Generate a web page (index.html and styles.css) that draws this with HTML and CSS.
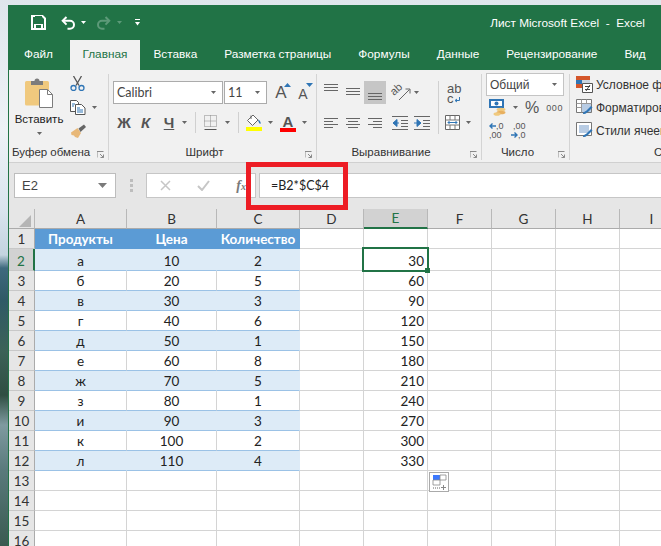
FILE: index.html
```html
<!DOCTYPE html>
<html lang="ru">
<head>
<meta charset="utf-8">
<title>Лист Microsoft Excel - Excel</title>
<link rel="stylesheet" href="styles.css">
</head>
<body>
<div class="desktop">
  <div class="window">
    <header class="titlebar">
      <div class="qat">
        <svg class="q-save" width="15" height="15" viewBox="0 0 15 15"><path d="M1 1h10.500L14 3.500V14H1z" fill="none" stroke="#fff" stroke-width="2"/><path d="M4 1h7v4H4z" fill="#217346"/><path d="M3 9h9v5H3z" fill="#fff"/><path d="M5 10h5v3H5z" fill="#217346"/></svg>
        <svg class="q-undo" width="15" height="14" viewBox="0 0 15 14"><path d="M5.500 1 1.700 4.800l3.800 3.800" fill="none" stroke="#fff" stroke-width="2"/><path d="M2 4.800h7a4 4 0 0 1 0 8H6.500" fill="none" stroke="#fff" stroke-width="2"/></svg>
        <svg class="q-a1" width="5" height="3" viewBox="0 0 5 3"><path d="M0 0h5L2.500 3z" fill="#fff"/></svg>
        <svg class="q-redo" width="15" height="14" viewBox="0 0 15 14"><path d="M9.500 1l3.800 3.800-3.800 3.800" fill="none" stroke="#5d9a79" stroke-width="2"/><path d="M13 4.800H6a4 4 0 0 0 0 8h2.500" fill="none" stroke="#5d9a79" stroke-width="2"/></svg>
        <svg class="q-a2" width="5" height="3" viewBox="0 0 5 3"><path d="M0 0h5L2.500 3z" fill="#5d9a79"/></svg>
        <svg class="q-more" width="5" height="7" viewBox="0 0 5 7"><path d="M0 0h5v1H0z" fill="#fff"/><path d="M0 3h5L2.500 6.500z" fill="#fff"/></svg>
      </div>
      <div class="doc-title">Лист Microsoft Excel&nbsp; -&nbsp; Excel</div>
    </header>

    <nav class="tabs">
      <span class="tab t-file">Файл</span>
      <span class="tab t-active">Главная</span>
      <span class="tab">Вставка</span>
      <span class="tab">Разметка страницы</span>
      <span class="tab">Формулы</span>
      <span class="tab">Данные</span>
      <span class="tab">Рецензирование</span>
      <span class="tab">Вид</span>
    </nav>

    <section class="ribbon">
      <div class="group g-clip">
        <div class="clip-body">
          <div class="paste">
            <svg width="28" height="30" viewBox="0 0 28 30"><path d="M1.500 3h21a1.500 1.500 0 0 1 1.500 1.500V26a1.500 1.500 0 0 1-1.500 1.500h-21A1.500 1.500 0 0 1 0 26V4.500A1.500 1.500 0 0 1 1.500 3z" fill="#f0c97e"/><path d="M6 3h3.500a2.500 2.500 0 0 1 5 0H18v4H6z" fill="#7c7c7c"/><path d="M14.500 11.500h8l5 5v13h-13z" fill="#fff" stroke="#7c7c7c"/><path d="M22.500 11.500v5h5" fill="none" stroke="#7c7c7c"/></svg>
            <span class="paste-label">Вставить</span>
            <svg class="paste-arrow" width="5" height="3" viewBox="0 0 5 3"><path d="M0 0h5L2.500 3z" fill="#666"/></svg>
          </div>
          <div class="clip-tools">
            <svg width="15" height="15" viewBox="0 0 15 15"><path d="M3.500 0l5.500 9.500M11.500 0 6 9.500" stroke="#555" stroke-width="1.300" fill="none"/><circle cx="3.500" cy="12" r="2.500" fill="none" stroke="#2f75b5" stroke-width="1.300"/><circle cx="11.500" cy="12" r="2.500" fill="none" stroke="#2f75b5" stroke-width="1.300"/></svg>
            <div class="tool-row">
              <svg width="16" height="15" viewBox="0 0 16 15"><path d="M.5.500h6l2 2v9h-8z" fill="#fff" stroke="#555"/><path d="M5.500 4.500h6l3.500 3.500v6.500H5.500z" fill="#fff" stroke="#555"/><path d="M7 8h3M7 10h6M7 12h6M2 4h3M2 6h2" stroke="#2f75b5"/></svg>
              <svg class="a-copy" width="5" height="3" viewBox="0 0 5 3"><path d="M0 0h5L2.500 3z" fill="#666"/></svg>
            </div>
            <svg width="18" height="15" viewBox="0 0 18 15"><path d="M1 8.500 7.500 4l3.500 5-3 5-3-1-1-1.500-2.500-.5z" fill="#e8b878"/><path d="M8.500 4.500 14 .5l2 2.500-5.500 5z" fill="#666"/></svg>
          </div>
        </div>
        <div class="glabel l-clip">Буфер обмена<svg class="launch" width="7" height="7" viewBox="0 0 7 7"><path d="M0 6.500V.5h6.500M3 3l3.500 3.500M6.500 3.500v3h-3" fill="none" stroke="#8a8a8a"/></svg></div>
      </div>

      <div class="group g-font">
        <div class="rows">
          <div class="row">
            <div class="select s-font"><span class="s-text">Calibri</span><svg width="5" height="3" viewBox="0 0 5 3"><path d="M0 0h5L2.500 3z" fill="#666"/></svg></div>
            <div class="select s-size"><span class="s-text">11</span><svg width="5" height="3" viewBox="0 0 5 3"><path d="M0 0h5L2.500 3z" fill="#666"/></svg></div>
            <span class="grow">A<svg width="7" height="4" viewBox="0 0 7 4"><path d="M0 4h7L3.500 0z" fill="#2f75b5"/></svg></span>
            <span class="shrink">A<svg width="7" height="4" viewBox="0 0 7 4"><path d="M0 0h7L3.500 4z" fill="#2f75b5"/></svg></span>
          </div>
          <div class="row">
            <span class="fmt f-b">Ж</span>
            <span class="fmt f-i">К</span>
            <span class="fmt f-u">Ч</span>
            <svg class="gap2" width="5" height="3" viewBox="0 0 5 3"><path d="M0 0h5L2.500 3z" fill="#666"/></svg>
            <i class="sep gap8"></i>
            <svg class="gap8" width="13" height="15" viewBox="0 0 13 15"><path d="M.5 14.500h12" stroke="#555"/><path d="M.5.500h12v11H.5zM6.500.5v11M.5 6h12" fill="none" stroke="#888" stroke-dasharray="1 1"/></svg>
            <svg class="gap8" width="5" height="3" viewBox="0 0 5 3"><path d="M0 0h5L2.500 3z" fill="#666"/></svg>
            <i class="sep gap8"></i>
            <svg class="gap7" width="16" height="17" viewBox="0 0 16 17"><path d="M7 1 1.500 6.500 6.500 11.500 12 6z" fill="#fff" stroke="#666"/><path d="M5 1.500V5" stroke="#666"/><path d="M12 5.500c2 1 3 2.500 2.500 4.500-1.500-.5-2-2-2.500-4.500z" fill="#2f75b5"/><path d="M0 13h16v4H0z" fill="#ff0"/></svg>
            <svg class="gap6" width="5" height="3" viewBox="0 0 5 3"><path d="M0 0h5L2.500 3z" fill="#666"/></svg>
            <span class="fcolor gap7">A</span>
            <svg class="gap6" width="5" height="3" viewBox="0 0 5 3"><path d="M0 0h5L2.500 3z" fill="#666"/></svg>
          </div>
        </div>
        <div class="glabel">Шрифт<svg class="launch" width="7" height="7" viewBox="0 0 7 7"><path d="M0 6.500V.5h6.500M3 3l3.500 3.500M6.500 3.500v3h-3" fill="none" stroke="#8a8a8a"/></svg></div>
      </div>

      <div class="group g-align">
        <div class="align-body">
          <div class="align-grid">
            <svg class="cell" width="22" height="23" viewBox="0 0 22 23"><path d="M4 3.500h14M4 6.500h14M4 9.500h14" stroke="#666"/></svg>
            <svg class="cell" width="22" height="23" viewBox="0 0 22 23"><path d="M4 7.500h14M4 10.500h14M4 13.500h14" stroke="#666"/></svg>
            <svg class="cell on" width="22" height="23" viewBox="0 0 22 23"><path d="M4 12.500h14M4 15.500h14M4 18.500h14" stroke="#666"/></svg>
            <span class="orient">
              <svg width="19" height="17" viewBox="0 0 19 17"><text class="orient-text" x="2" y="12" transform="rotate(-42 2 12)">ab</text><path d="M7 16 17.500 5.500M13.500 5h4.500v4.500" fill="none" stroke="#666"/></svg>
              <svg width="5" height="3" viewBox="0 0 5 3"><path d="M0 0h5L2.500 3z" fill="#666"/></svg>
            </span>
            <svg class="cell" width="22" height="23" viewBox="0 0 22 23"><path d="M4 7.500h14M4 10.500h9M4 13.500h14M4 16.500h9" stroke="#666"/></svg>
            <svg class="cell" width="22" height="23" viewBox="0 0 22 23"><path d="M4 7.500h14M6 10.500h10M4 13.500h14M6 16.500h10" stroke="#666"/></svg>
            <svg class="cell" width="22" height="23" viewBox="0 0 22 23"><path d="M4 7.500h14M9 10.500h9M4 13.500h14M9 16.500h9" stroke="#666"/></svg>
            <span class="indents">
              <svg width="16" height="14" viewBox="0 0 16 14"><path d="M0 .5h16M9 4.500h7M9 7.500h7M9 10.500h7M0 13.500h16" stroke="#666"/><path d="M7 7H3M5 3.500 1 7l4 3.500z" fill="#2f75b5" stroke="#2f75b5"/></svg>
              <svg width="16" height="14" viewBox="0 0 16 14"><path d="M0 .5h16M9 4.500h7M9 7.500h7M9 10.500h7M0 13.500h16" stroke="#666"/><path d="M0 7h4M3 3.500 7 7l-4 3.500z" fill="#2f75b5" stroke="#2f75b5"/></svg>
            </span>
          </div>
          <i class="sep-tall"></i>
          <div class="wrap-col">
            <span class="wrap-text">ab<br>c<svg width="6" height="6" viewBox="0 0 6 6"><path d="M5.500 0v3.500H1.500M3 2 1 3.500 3 5" fill="none" stroke="#2f75b5"/></svg></span>
            <span class="merge">
              <svg width="15" height="15" viewBox="0 0 15 15"><path d="M.5.500h14v14H.5z" fill="#fff" stroke="#666"/><path d="M.5 5H14.500M.5 10H14.500M5 .5V5M10 .5V5M5 10v4.500M10 10v4.500" stroke="#777" fill="none"/><path d="M3 7.500h9M4.500 6 3 7.500 4.500 9M10.500 6 12 7.500 10.500 9" fill="none" stroke="#2f75b5"/></svg>
              <svg width="5" height="3" viewBox="0 0 5 3"><path d="M0 0h5L2.500 3z" fill="#666"/></svg>
            </span>
          </div>
        </div>
        <div class="glabel">Выравнивание<svg class="launch" width="7" height="7" viewBox="0 0 7 7"><path d="M0 6.500V.5h6.500M3 3l3.500 3.500M6.500 3.500v3h-3" fill="none" stroke="#8a8a8a"/></svg></div>
      </div>

      <div class="group g-num">
        <div class="num-body">
          <div class="select s-num"><span class="s-text">Общий</span><svg width="5" height="3" viewBox="0 0 5 3"><path d="M0 0h5L2.500 3z" fill="#666"/></svg></div>
          <div class="num-row">
            <svg width="17" height="17" viewBox="0 0 17 17"><path d="M0 0h15v9H0z" fill="#2f75b5"/><path d="M2 2h11v5H2z" fill="#fff"/><circle cx="7.500" cy="4.500" r="2" fill="#2f75b5"/><ellipse cx="12" cy="10.500" rx="4.500" ry="1.800" fill="#f0c97e"/><ellipse cx="12" cy="13.500" rx="4.500" ry="1.800" fill="#e8b060"/><ellipse cx="8" cy="15" rx="3.500" ry="1.800" fill="#f0c97e"/></svg>
            <svg class="gap7" width="5" height="3" viewBox="0 0 5 3"><path d="M0 0h5L2.500 3z" fill="#666"/></svg>
            <span class="pct">%</span>
            <span class="thou">000</span>
          </div>
          <div class="num-row row-dec">
            <span class="dec"><svg width="7" height="6" viewBox="0 0 7 6"><path d="M7 3H1M3.500.5 1 3l2.500 2.500" fill="none" stroke="#2f75b5" stroke-width="1.400"/></svg><b>,0</b><em>,00</em></span>
            <span class="dec dec2"><b>,00</b><svg width="7" height="6" viewBox="0 0 7 6"><path d="M0 3h6M3.500.5 6 3 3.500 5.500" fill="none" stroke="#2f75b5" stroke-width="1.400"/></svg><em>,0</em></span>
          </div>
        </div>
        <div class="glabel">Число<svg class="launch" width="7" height="7" viewBox="0 0 7 7"><path d="M0 6.500V.5h6.500M3 3l3.500 3.500M6.500 3.500v3h-3" fill="none" stroke="#8a8a8a"/></svg></div>
      </div>

      <div class="group g-styles">
        <div class="style-list">
          <div class="style-row"><svg width="17" height="17" viewBox="0 0 17 17"><path d="M0 0h14v4H0z" fill="#d4562a"/><path d="M0 4h6v4H0z" fill="#2f75b5"/><path d="M6 4h8v4H6z" fill="#c8d4e0"/><path d="M0 8h6v4H0z" fill="#d4562a"/><path d="M6.500 7.500h10v9h-10z" fill="#fff" stroke="#555"/><path d="M9 10.500h5M9 13.500h5M10 15l4-6" stroke="#444" fill="none"/></svg><span>Условное форматирование</span></div>
          <div class="style-row"><svg width="17" height="17" viewBox="0 0 17 17"><path d="M.5.500h15v13H.5z" fill="#fff" stroke="#777"/><path d="M.5 4.500h15M.5 8.500h15M5.500.5v13M10.500.5v13" stroke="#999"/><path d="M6 5h9v8H6z" fill="#b8cce4"/><path d="M7 15c0-3 3-2 4-4l4-4 1.500 1.500-4 4c-2 1-2 3-5.500 2.500z" fill="#2f75b5"/></svg><span>Форматировать как таблицу</span></div>
          <div class="style-row"><svg width="17" height="17" viewBox="0 0 17 17"><path d="M.5.500h15v13H.5z" fill="#fff" stroke="#777"/><path d="M3 3h10v8H3z" fill="#b8cce4"/><path d="M7 15c0-3 3-2 4-4l4-4 1.500 1.500-4 4c-2 1-2 3-5.500 2.500z" fill="#2f75b5"/></svg><span>Стили ячеек</span></div>
        </div>
        <div class="glabel l-styles">Стили</div>
      </div>
    </section>

    <section class="formula-bar">
      <div class="namebox"><span>E2</span><svg width="9" height="5" viewBox="0 0 9 5"><path d="M0 0h9L4.500 5z" fill="#7a7a7a"/></svg></div>
      <svg class="dots" width="3" height="13" viewBox="0 0 3 13"><path d="M0 0h3v3H0zM0 5h3v3H0zM0 10h3v3H0z" fill="#bdbdbd"/></svg>
      <div class="fx-btns">
        <svg width="11" height="11" viewBox="0 0 11 11"><path d="M1 1l9 9M10 1l-9 9" stroke="#c6c6c6" stroke-width="1.500"/></svg>
        <svg width="13" height="11" viewBox="0 0 13 11"><path d="M1 6l4 4 7-9" fill="none" stroke="#c6c6c6" stroke-width="2"/></svg>
        <span class="fx">f<small>x</small></span>
      </div>
      <div class="formula">=B2*$C$4</div>
      <div class="redbox"></div>
    </section>

    <section class="sheet">
      <table class="grid">
        <colgroup><col class="c-h"><col class="c-a"><col class="c-b"><col class="c-c"><col class="c-n"><col class="c-n"><col class="c-n"><col class="c-n"><col class="c-n"><col class="c-n"></colgroup>
        <thead>
          <tr><th class="corner"><svg width="12" height="12" viewBox="0 0 12 12"><path d="M12 0v12H0z" fill="#b5b5b5"/></svg></th><th>A</th><th>B</th><th>C</th><th>D</th><th class="col-sel">E</th><th>F</th><th>G</th><th>H</th><th>I</th></tr>
        </thead>
        <tbody>
          <tr class="row-head"><th>1</th><td class="t">Продукты</td><td class="t">Цена</td><td class="t">Количество</td><td></td><td></td><td></td><td></td><td></td><td></td></tr>
          <tr class="band tall"><th class="row-sel">2</th><td class="t">а</td><td class="t">10</td><td class="t">2</td><td></td><td class="n active">30<i class="sel-box"></i><i class="sel-handle"></i></td><td></td><td></td><td></td><td></td></tr>
          <tr class="plain"><th>3</th><td class="t">б</td><td class="t">20</td><td class="t">5</td><td></td><td class="n">60</td><td></td><td></td><td></td><td></td></tr>
          <tr class="band"><th>4</th><td class="t">в</td><td class="t">30</td><td class="t">3</td><td></td><td class="n">90</td><td></td><td></td><td></td><td></td></tr>
          <tr class="plain"><th>5</th><td class="t">г</td><td class="t">40</td><td class="t">6</td><td></td><td class="n">120</td><td></td><td></td><td></td><td></td></tr>
          <tr class="band"><th>6</th><td class="t">д</td><td class="t">50</td><td class="t">1</td><td></td><td class="n">150</td><td></td><td></td><td></td><td></td></tr>
          <tr class="plain"><th>7</th><td class="t">е</td><td class="t">60</td><td class="t">8</td><td></td><td class="n">180</td><td></td><td></td><td></td><td></td></tr>
          <tr class="band"><th>8</th><td class="t">ж</td><td class="t">70</td><td class="t">5</td><td></td><td class="n">210</td><td></td><td></td><td></td><td></td></tr>
          <tr class="plain"><th>9</th><td class="t">з</td><td class="t">80</td><td class="t">1</td><td></td><td class="n">240</td><td></td><td></td><td></td><td></td></tr>
          <tr class="band"><th>10</th><td class="t">и</td><td class="t">90</td><td class="t">3</td><td></td><td class="n">270</td><td></td><td></td><td></td><td></td></tr>
          <tr class="plain"><th>11</th><td class="t">к</td><td class="t">100</td><td class="t">2</td><td></td><td class="n">300</td><td></td><td></td><td></td><td></td></tr>
          <tr class="band"><th>12</th><td class="t">л</td><td class="t">110</td><td class="t">4</td><td></td><td class="n">330</td><td></td><td></td><td></td><td></td></tr>
          <tr><th>13</th><td></td><td></td><td></td><td></td><td></td><td class="anchor"><span class="paste-opt"><svg width="18" height="18" viewBox="0 0 18 18"><path d="M3 2h7v5H3z" fill="#3b78ff"/><path d="M3 7h7v5H3zM10 2h6v5h-6z" fill="#fff" stroke="#888" stroke-width=".8"/><path d="M3 15h7" stroke="#666" stroke-dasharray="1 1"/><path d="M11 14.500h5M13.500 12v5" stroke="#888"/></svg></span></td><td></td><td></td><td></td></tr>
          <tr><th>14</th><td></td><td></td><td></td><td></td><td></td><td></td><td></td><td></td><td></td></tr>
          <tr><th>15</th><td></td><td></td><td></td><td></td><td></td><td></td><td></td><td></td><td></td></tr>
          <tr><th>16</th><td></td><td></td><td></td><td></td><td></td><td></td><td></td><td></td><td></td></tr>
        </tbody>
      </table>
    </section>
  </div>
</div>
</body>
</html>
```
FILE: styles.css
```css
* { box-sizing: border-box; }
html, body { margin: 0; padding: 0; height: 100%; overflow: hidden; }
body { font-family: "Liberation Sans", Arial, sans-serif; color: #333; }

.desktop {
  width: 661px; height: 546px; overflow: hidden; padding: 5px 0 0 8px;
  background:
    linear-gradient(180deg, #dfe6ec 0, #e4eaf0 40px, #eef2f6 130px, #d9e4ee 210px, #c3d3df 255px, #3e6a7e 268px, #2f5a66 300px, #3c6258 350px, #2f4e42 395px, #7f9aa0 425px, #5a7a7c 470px, #3a5a50 546px);
}
.window { width: 653px; height: 541px; background: #fff; border-left: 1px solid #217346; overflow: hidden; display: flex; flex-direction: column; }

/* title bar */
.titlebar { height: 35px; background: #217346; display: flex; align-items: center; flex: none; }
.qat { display: flex; align-items: center; padding-left: 22px; }
.q-undo { margin-left: 15px; }
.q-a1 { margin-left: 5px; }
.q-redo { margin-left: 10px; }
.q-a2 { margin-left: 6px; }
.q-more { margin-left: 13px; }
.doc-title { margin-left: auto; margin-right: 16px; color: #fff; font-size: 11.800px; white-space: nowrap; }

.tabs { height: 30px; background: #217346; display: flex; padding-left: 1px; flex: none; color: #fff; font-size: 11.800px; white-space: nowrap; }
.tab { padding: 0 13.500px; line-height: 29px; }
.t-file { padding: 0 17px 0 14px; }
.t-active { background: #f1f1f1; color: #217346; padding: 0 12.500px; }

/* ribbon */
.ribbon { height: 93px; background: #f1f1f1; border-bottom: 1px solid #d0d0d0; display: flex; flex: none; padding: 4px 0 2px; overflow: hidden; }
.group { height: 86px; border-right: 1px solid #d4d4d4; flex: none; display: flex; flex-direction: column; position: relative; }
.g-clip { width: 100px; }
.g-font { width: 208px; }
.g-align { width: 165px; }
.g-num { width: 88px; }
.g-styles { width: 100px; border-right: 0; }
.glabel { margin-top: auto; height: 16px; line-height: 16px; padding-right: 16px; text-align: center; font-size: 11.500px; color: #333; white-space: nowrap; }
.l-clip { text-align: left; padding-left: 3px; padding-right: 0; }
.launch { position: absolute; right: 4px; bottom: 2px; }
.l-styles { text-align: left; padding-left: 84px; padding-right: 0; }

.clip-body { display: flex; }
.paste { width: 54px; margin-left: 3px; padding-top: 4px; display: flex; flex-direction: column; align-items: center; }
.paste-label { font-size: 11.500px; line-height: 16px; margin-top: 3px; color: #222; }
.paste-arrow { margin-top: 5px; }
.clip-tools { margin-left: 4px; padding-top: 2px; display: flex; flex-direction: column; gap: 9px; }
.clip-tools svg { display: block; }
.tool-row { display: flex; align-items: center; }
.a-copy { margin-left: 6px; }

.rows { padding: 7px 0 0 4px; display: flex; flex-direction: column; gap: 7px; }
.row { display: flex; align-items: center; height: 23px; }
.select { height: 23px; background: #fff; border: 1px solid #ababab; display: flex; align-items: center; justify-content: space-between; padding: 0 6px 0 3px; }
.s-font { width: 110px; margin-right: 1px; }
.s-size { width: 43px; margin-right: 3px; }
.s-text { font-family: "Lato", sans-serif; font-size: 12.500px; color: #444; }
.grow, .shrink { width: 22px; color: #555; position: relative; text-align: center; }
.grow { font-size: 17px; }
.shrink { font-size: 14px; padding-top: 3px; }
.grow svg, .shrink svg { position: absolute; right: 1px; top: 0; }
.fmt { font-size: 15px; font-weight: 700; color: #555; text-align: center; }
.f-b { width: 22px; }
.f-i { width: 21px; font-style: italic; }
.f-u { width: 22px; margin-left: 2px; text-decoration: underline; }
.sep { display: block; width: 1px; height: 21px; background: #d0d0d0; }
.gap2 { margin-left: 2px; }
.gap6 { margin-left: 6px; }
.gap7 { margin-left: 7px; }
.gap8 { margin-left: 8px; }
.fcolor { width: 16px; height: 18px; font-weight: 700; font-size: 15px; line-height: 15px; text-align: center; color: #555; border-bottom: 4px solid #f00; }

.align-body { display: flex; padding: 7px 0 0 3px; }
.align-grid { display: grid; grid-template-columns: 22px 22px 22px 52px; grid-auto-rows: 23px; row-gap: 7px; }
.cell { display: block; }
.on { background: #c6c6c6; }
.orient { display: flex; align-items: center; gap: 3px; padding-left: 6px; }
.orient svg { overflow: visible; }
.orient-text { font-size: 11px; fill: #555; }
.indents { display: flex; align-items: center; gap: 6px; padding-left: 6px; }
.sep-tall { width: 1px; height: 53px; background: #d0d0d0; }
.wrap-col { margin-left: 6px; display: flex; flex-direction: column; gap: 7px; }
.wrap-text { height: 23px; font-size: 13px; line-height: 10px; color: #555; padding: 3px 0 0 2px; }
.merge { display: flex; align-items: center; gap: 6px; height: 23px; }

.num-body { padding-left: 4px; margin-top: -1px; }
.s-num { width: 78px; border-color: #c4c4c4; }
.s-num .s-text { font-family: "Liberation Sans", sans-serif; font-size: 12px; color: #444; }
.num-row { display: flex; align-items: center; height: 23px; padding-left: 3px; }
.pct { margin-left: 7px; font-size: 16px; color: #555; }
.thou { margin-left: 7px; font-size: 9px; letter-spacing: .6px; color: #555; }
.row-dec { gap: 7px; }
.dec { display: grid; grid-template-columns: 7px 8px; grid-template-rows: 9px 9px; width: 15px; height: 18px; font-size: 9px; line-height: 9px; color: #555; }
.dec b { font-weight: 400; }
.dec em { grid-column: 1 / 3; font-style: normal; }
.dec svg { margin-top: 1px; }
.dec2 b { grid-column: 1 / 3; padding-left: 2px; }
.dec2 em { grid-column: 2; }

.style-list { padding: 0 0 0 6px; margin-top: -1px; display: flex; flex-direction: column; }
.style-row { height: 23px; display: flex; align-items: center; gap: 3px; font-size: 12px; color: #333; white-space: nowrap; }
.style-row svg { flex: none; }

/* formula bar */
.formula-bar { height: 46px; background: #e6e6e6; flex: none; display: flex; align-items: flex-start; padding: 10px 0 0 5px; position: relative; }
.namebox { width: 102px; height: 25px; background: #fff; border: 1px solid #bdbdbd; display: flex; align-items: center; justify-content: space-between; padding: 0 8px 0 7px; font-size: 13px; color: #444; }
.dots { margin: 6px 0 0 14px; }
.fx-btns { margin-left: 13px; width: 110px; height: 25px; background: #fff; border: 1px solid #c6c6c6; display: flex; align-items: center; padding: 0 9px 0 13px; justify-content: space-between; }
.fx { font-family: "Liberation Serif", serif; font-style: italic; font-weight: 700; font-size: 14px; color: #7a7a7a; }
.fx small { font-size: 10px; }
.formula { margin-left: 3px; flex: 1; height: 25px; background: #fff; border: 1px solid #c6c6c6; border-right: 0; padding-left: 11px; line-height: 23px; font-family: "Lato", sans-serif; font-size: 12.500px; color: #222; }
.redbox { position: absolute; left: 237px; top: -1px; width: 102px; height: 48px; border: 5px solid #ed1c24; }

/* sheet */
.sheet { flex: 1; overflow: hidden; background: #fff; }
.grid { table-layout: fixed; width: 675px; border-collapse: separate; border-spacing: 0; font-family: "Lato", sans-serif; font-size: 13.500px; color: #222; }
.c-h { width: 26px; }
.c-a { width: 92px; }
.c-b { width: 90px; }
.c-c { width: 83px; }
.c-n { width: 64px; }
.grid th, .grid td { height: 20px; padding: 0; font-weight: 400; text-align: center; line-height: 18px; border-right: 1px solid #d4d4d4; border-bottom: 1px solid #d4d4d4; overflow: visible; }
.grid thead th { background: #e6e6e6; border-right-color: #b8b8b8; border-bottom-color: #ababab; color: #333; }
.corner svg { display: block; margin: 4px 0 0 10px; }
.grid .col-sel { background: #d2d2d2; color: #217346; border-bottom: 2px solid #217346; }
.grid tbody th { background: #e6e6e6; border-right-color: #ababab; border-bottom-color: #c8c8c8; color: #333; }
.grid tbody .row-sel { background: #d2d2d2; border-right: 2px solid #217346; color: #217346; }
.tall th, .tall td { height: 22px; vertical-align: bottom; }
.row-head .t { background: #5b9bd5; color: #fff; font-weight: 700; border-color: #5b9bd5; }
.band .t { background: #ddebf7; border-right-color: #ddebf7; border-bottom-color: #9bc2e6; }
.plain .t { border-bottom-color: #9bc2e6; }
.grid .n { text-align: right; padding-right: 3px; }
.active, .anchor { position: relative; }
.sel-box { position: absolute; left: -2px; right: -2px; top: -2px; bottom: -2px; border: 2px solid #217346; }
.sel-handle { position: absolute; right: -3px; bottom: -3px; width: 5px; height: 5px; background: #217346; }
.paste-opt { position: absolute; left: 1px; top: 1px; width: 20px; height: 20px; background: #fff; border: 1px solid #aaa; display: block; }
.paste-opt svg { display: block; }
```
